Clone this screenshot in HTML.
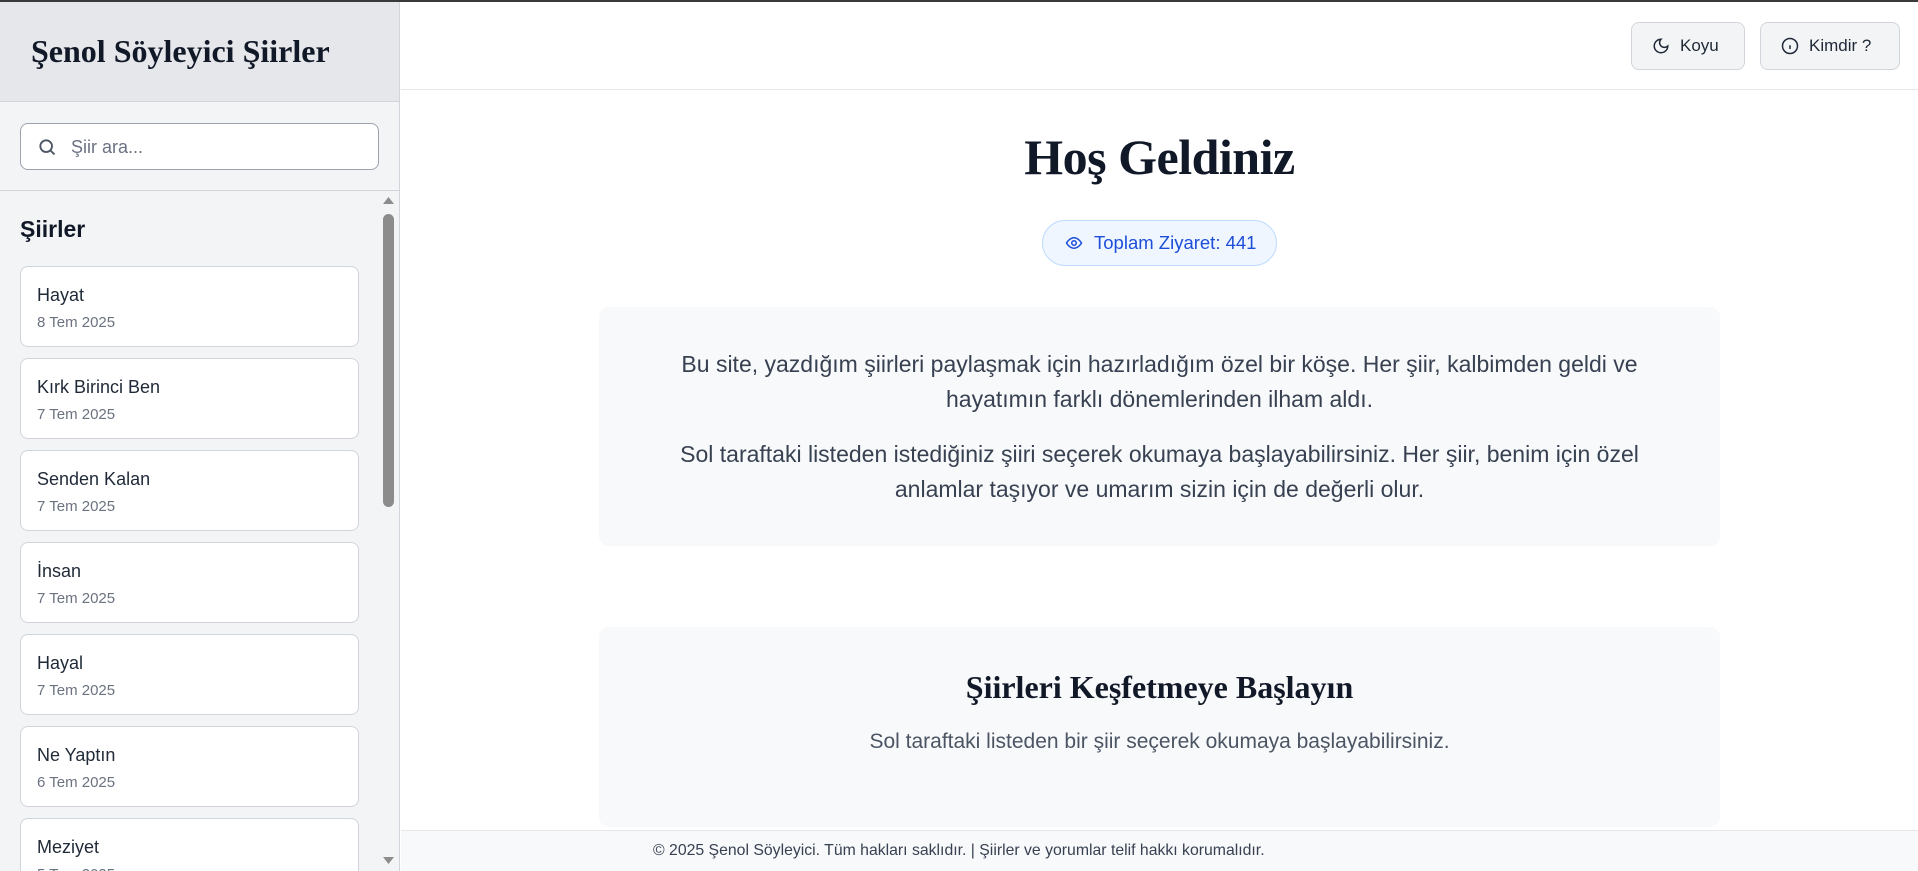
<!DOCTYPE html>
<html><head><meta charset="utf-8"><style>
*{box-sizing:border-box;margin:0;padding:0}
html{width:1918px;height:871px;overflow:hidden}
body{width:1918px;height:871px;overflow:hidden;font-family:"Liberation Sans",sans-serif;background:#fff;position:relative;color:#111827}
.topline{position:absolute;left:0;top:0;width:1918px;height:2px;background:#3a3a3a;z-index:5}
.side{position:absolute;left:0;top:0;width:400px;height:871px;background:#f3f4f6;border-right:1px solid #d1d5db;overflow:hidden}
.sh{height:102px;background:#e5e7eb;border-bottom:1px solid #d1d5db;padding:33px 0 0 31px;font-family:"Liberation Serif",serif;font-weight:bold;font-size:32px;color:#111827}
.search{position:absolute;left:20px;top:123px;width:359px;height:47px;border:1px solid #9ca3af;border-radius:8px;background:#fff}
.search span{position:absolute;left:50px;top:13px;font-size:18px;color:#6b7280}
.search svg{position:absolute;left:16px;top:13px}
.div{position:absolute;left:0;top:190px;width:400px;height:1px;background:#d1d5db}
.lh{position:absolute;left:20px;top:216px;font-size:23px;font-weight:bold;color:#111827}
.card{position:absolute;left:20px;width:339px;height:81px;background:#fff;border:1px solid #d1d5db;border-radius:8px}
.card b{position:absolute;left:16px;top:18px;font-weight:normal;font-size:18px;color:#1f2937}
.card i{position:absolute;left:16px;top:47px;font-style:normal;font-size:15px;color:#6b7280}
.sb{position:absolute;left:383px;top:214px;width:11px;height:293px;background:#8c8c8c;border-radius:6px}
.main{position:absolute;left:401px;top:0;right:0;height:871px;overflow:hidden}
.tb{height:90px;border-bottom:1px solid #e5e7eb}
.btn{position:absolute;top:22px;height:48px;background:#f3f4f6;border:1px solid #d1d5db;border-radius:8px;font-size:17px;color:#1f2937;display:flex;align-items:center;gap:10px;padding-left:20px}
h1{position:absolute;left:0;right:0;top:128px;text-align:center;font-family:"Liberation Serif",serif;font-size:50px;font-weight:bold;color:#111827;letter-spacing:-0.5px}
.badge{position:absolute;left:641px;top:220px;width:235px;height:46px;border:1px solid #bfdbfe;background:#eff6ff;border-radius:23px;color:#1d4ed8;font-size:18.5px;display:flex;align-items:center;gap:11px;padding-left:22px}
.box{position:absolute;left:198px;width:1121px;background:#f8f9fb;border-radius:10px;text-align:center}
.box p{font-size:23px;line-height:35px;color:#374151}
.foot{position:absolute;left:0;right:0;top:830px;height:41px;background:#f8f9fb;border-top:1px solid #e5e7eb;font-size:15.8px;color:#374151;padding:11px 0 0 252px}
</style></head><body>
<div class="topline"></div>
<div class="side">
<div class="sh">Şenol Söyleyici Şiirler</div>
<div class="search"><svg width="20" height="20" viewBox="0 0 24 24" fill="none" stroke="#4b5563" stroke-width="2.2"><circle cx="11" cy="11" r="7"/><path d="M16 16l5 5"/></svg><span>Şiir ara...</span></div>
<div class="div"></div>
<div class="lh">Şiirler</div>
<div class="card" style="top:266px"><b>Hayat</b><i>8 Tem 2025</i></div>
<div class="card" style="top:358px"><b>Kırk Birinci Ben</b><i>7 Tem 2025</i></div>
<div class="card" style="top:450px"><b>Senden Kalan</b><i>7 Tem 2025</i></div>
<div class="card" style="top:542px"><b>İnsan</b><i>7 Tem 2025</i></div>
<div class="card" style="top:634px"><b>Hayal</b><i>7 Tem 2025</i></div>
<div class="card" style="top:726px"><b>Ne Yaptın</b><i>6 Tem 2025</i></div>
<div class="card" style="top:818px"><b>Meziyet</b><i>5 Tem 2025</i></div>
<svg style="position:absolute;left:382px;top:196px" width="13" height="9"><path d="M1 8L6.5 1L12 8Z" fill="#8c8c8c"/></svg>
<div class="sb"></div>
<svg style="position:absolute;left:382px;top:856px" width="13" height="9"><path d="M1 1L6.5 8L12 1Z" fill="#8c8c8c"/></svg>
</div>
<div class="main">
<div class="tb"></div>
<div class="btn" style="left:1230px;width:114px"><svg width="18" height="18" viewBox="0 0 24 24" fill="none" stroke="#1f2937" stroke-width="2"><path d="M12 3a6 6 0 0 0 9 9 9 9 0 1 1-9-9z"/></svg>Koyu</div>
<div class="btn" style="left:1359px;width:140px"><svg width="18" height="18" viewBox="0 0 24 24" fill="none" stroke="#1f2937" stroke-width="2"><circle cx="12" cy="12" r="10"/><path d="M12 16v-5M12 8h.01"/></svg>Kimdir ?</div>
<h1>Hoş Geldiniz</h1>
<div class="badge"><svg width="18" height="18" viewBox="0 0 24 24" fill="none" stroke="#1d4ed8" stroke-width="2"><path d="M2 12s4-7 10-7 10 7 10 7-4 7-10 7S2 12 2 12z"/><circle cx="12" cy="12" r="3"/></svg>Toplam Ziyaret: 441</div>
<div class="box" style="top:307px;height:239px;padding-top:40px">
<p>Bu site, yazdığım şiirleri paylaşmak için hazırladığım özel bir köşe. Her şiir, kalbimden geldi ve<br>hayatımın farklı dönemlerinden ilham aldı.</p>
<p style="margin-top:20px">Sol taraftaki listeden istediğiniz şiiri seçerek okumaya başlayabilirsiniz. Her şiir, benim için özel<br>anlamlar taşıyor ve umarım sizin için de değerli olur.</p>
</div>
<div class="box" style="top:627px;height:200px;padding-top:42px">
<div style="font-family:'Liberation Serif',serif;font-weight:bold;font-size:32px;color:#111827">Şiirleri Keşfetmeye Başlayın</div>
<div style="font-size:21px;color:#4b5563;margin-top:24px">Sol taraftaki listeden bir şiir seçerek okumaya başlayabilirsiniz.</div>
</div>
<div class="foot">© 2025 Şenol Söyleyici. Tüm hakları saklıdır. | Şiirler ve yorumlar telif hakkı korumalıdır.</div>
</div>
</body></html>
